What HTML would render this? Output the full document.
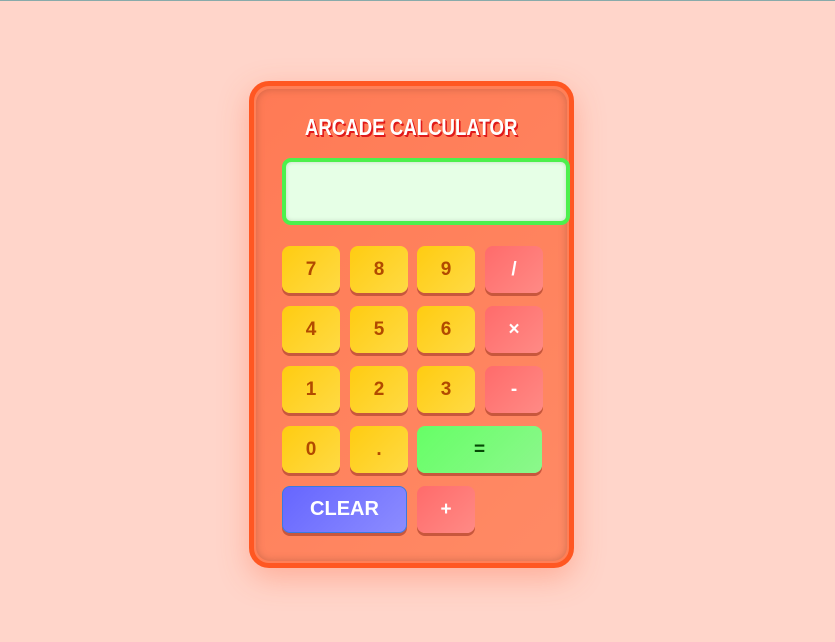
<!DOCTYPE html>
<html><head><style>
body{margin:0;width:835px;height:642px;background:#ffd5ca;border-top:1px solid #8aa;box-sizing:border-box;position:relative;overflow:hidden;font-family:"Liberation Sans",sans-serif}
.outer{position:absolute;left:249px;top:80px;width:315px;height:477px;border:5px solid #ff5722;border-radius:20px;background:#ff7f57;box-shadow:0 10px 30px rgba(255,100,60,.35)}
.inner{position:absolute;left:2px;top:3px;right:2px;bottom:2px;border-radius:14px;background:linear-gradient(135deg,#ff7a55,#ff8a65);box-shadow:inset 0 0 8px rgba(120,60,40,.35)}
.title{position:absolute;left:0;width:823px;top:113px;text-align:center;color:#fff;font-weight:bold;font-size:23px;text-shadow:1px 1px 0 #e01a1a,2px 2px 0 #e01a1a}
.title span{display:inline-block;transform:scaleX(.81);letter-spacing:0}
.disp{position:absolute;left:282px;top:157px;width:280px;height:59px;border:4px solid #4cf04c;border-radius:9px;background:#e6ffe6;box-shadow:inset 0 0 4px rgba(0,0,0,.15)}
.b{position:absolute;width:58px;height:47px;border-radius:8px;box-shadow:0 3px 0 #c8573d;display:flex;align-items:center;justify-content:center;font-weight:bold;font-size:19px;box-sizing:border-box}
.y{background:linear-gradient(135deg,#ffcc11,#ffda44);color:#b24a00}
.r{background:linear-gradient(135deg,#ff6b6b,#ff8a85);color:#fff}
.g{background:linear-gradient(135deg,#66ff66,#8cf78c);color:#064806;width:125px}
.c{background:linear-gradient(135deg,#6666ff,#8c8cff);color:#fff;width:125px;font-size:20px;border:1px solid #3a7ae0}
</style></head><body>
<div class="outer"><div class="inner"></div></div>
<div class="title"><span>ARCADE CALCULATOR</span></div>
<div class="disp"></div>
<div class="b y" style="left:282px;top:245px">7</div>
<div class="b y" style="left:350px;top:245px">8</div>
<div class="b y" style="left:417px;top:245px">9</div>
<div class="b r" style="left:485px;top:245px">/</div>
<div class="b y" style="left:282px;top:305px">4</div>
<div class="b y" style="left:350px;top:305px">5</div>
<div class="b y" style="left:417px;top:305px">6</div>
<div class="b r" style="left:485px;top:305px">×</div>
<div class="b y" style="left:282px;top:365px">1</div>
<div class="b y" style="left:350px;top:365px">2</div>
<div class="b y" style="left:417px;top:365px">3</div>
<div class="b r" style="left:485px;top:365px">-</div>
<div class="b y" style="left:282px;top:425px">0</div>
<div class="b y" style="left:350px;top:425px">.</div>
<div class="b g" style="left:417px;top:425px">=</div>
<div class="b c" style="left:282px;top:485px">CLEAR</div>
<div class="b r" style="left:417px;top:485px">+</div>
</body></html>
